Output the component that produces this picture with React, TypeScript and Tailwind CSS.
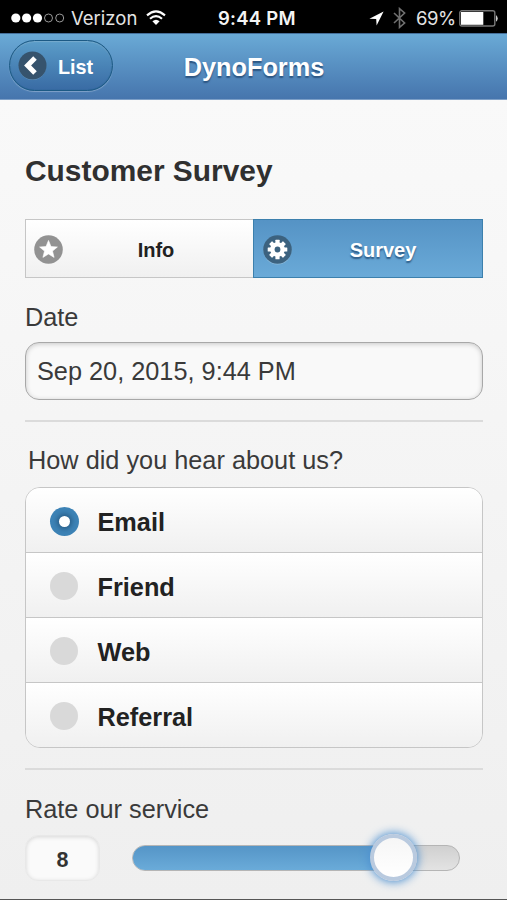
import React, { useState } from 'react';

const SOURCES = ['Email', 'Friend', 'Web', 'Referral'];

const StatusBar: React.FC = () => (
  <div className="h-[33px] bg-black text-white flex items-center pl-[11px] pr-[10px] pt-[3px] font-['Inter','Liberation_Sans',sans-serif] text-[18.5px] leading-[30px]">
    <div className="flex items-center w-[207px]">
      <svg width="54" height="10" viewBox="0 0 54 10">
        <circle cx="4.8" cy="5" r="4.6" fill="#fff" />
        <circle cx="15.6" cy="5" r="4.6" fill="#fff" />
        <circle cx="26.5" cy="5" r="4.6" fill="#fff" />
        <circle cx="37.5" cy="5" r="4" fill="none" stroke="#999" strokeWidth="1" />
        <circle cx="48.7" cy="5" r="4" fill="none" stroke="#999" strokeWidth="1" />
      </svg>
      <span className="ml-[6px] w-[66px] text-[#e4e4e4] whitespace-nowrap">Verizon</span>
      <svg className="ml-[9px]" width="20" height="16" viewBox="0 0 20 16">
        <path d="M1 5.4 Q10 -2.6 19 5.4" fill="none" stroke="#fff" strokeWidth="2.1" />
        <path d="M4 8.7 Q10 3.5 16 8.7" fill="none" stroke="#fff" strokeWidth="2.1" />
        <path d="M6.4 11.2 Q10 8.2 13.6 11.2 L10 15 Z" fill="#fff" />
      </svg>
    </div>
    <span className="font-semibold tracking-[0.25px] text-[#f4f4f4] whitespace-nowrap">9:44 PM</span>
    <div className="flex items-center flex-1 justify-end">
      <svg width="15" height="15" viewBox="0 0 15 15" fill="#fff">
        <path d="M14.6 0.4 L0.4 7.8 L7.2 8 L7.6 14.6 Z" />
      </svg>
      <svg className="ml-[9px]" width="13" height="22" viewBox="0 0 13 22" fill="none" stroke="#707070" strokeWidth="1.6">
        <path d="M1 6 L11.6 16 L6.5 20.4 V1.6 L11.6 6 L1 16" />
      </svg>
      <span className="ml-[10px] w-[39px] text-[#e4e4e4] whitespace-nowrap tracking-[-0.5px]">69%</span>
      <svg className="ml-[4px] -mr-[2px]" width="40" height="17" viewBox="0 0 40 17">
        <rect x="0.8" y="0.8" width="35" height="15.2" rx="2" fill="none" stroke="#777" strokeWidth="1.4" />
        <rect x="2" y="2" width="22.3" height="12.8" fill="#fff" />
        <path d="M37 5 Q40.5 8.4 37 11.8 Z" fill="#ccc" />
      </svg>
    </div>
  </div>
);

const Header: React.FC = () => (
  <header className="h-[67px] border-y border-t-[#456f9a] border-b-[#7d9fc7] bg-linear-to-b from-[#6aaad6] to-[#4675ad] grid grid-cols-[1fr_auto_1fr] items-center px-[9px] text-white font-bold [text-shadow:0_1.5px_1.5px_#2b5480]">
    <button
      type="button"
      className="relative -top-px w-[104px] h-[51px] rounded-full border-[1.6px] border-[#1c5a85] bg-linear-to-b from-[#5b9dc9] to-[#396ba4] shadow-[0_1px_1px_rgba(255,255,255,0.3),inset_0_0_1px_#1c5a85,inset_0_1px_1px_rgba(255,255,255,0.25)] flex items-center pl-[8px] text-[19.8px] leading-[24px]"
    >
      <svg width="29" height="29" viewBox="0 0 29 29" className="shrink-0">
        <circle cx="14.5" cy="15.3" r="13.6" fill="#80b2d6" opacity="0.6" />
        <circle cx="14.5" cy="14.5" r="14" fill="#36536d" />
        <path d="M17 7 L9.6 14.5 L17 22" fill="none" stroke="#fff" strokeWidth="5" />
      </svg>
      <span className="ml-[11px] mt-[3px]">List</span>
    </button>
    <h1 className="text-[25.3px] leading-[30px] pl-px">DynoForms</h1>
  </header>
);

const Divider: React.FC = () => <div className="h-[2px] bg-[#dbdbdb]" />;

const StarIcon: React.FC = () => (
  <svg width="29" height="29" viewBox="0 0 29 29" className="mt-[2px]">
    <circle cx="14.5" cy="14.5" r="14.3" fill="#929292" />
    <path d="M14.5 5.4 L17 11.6 L23.4 12 L18.5 16.1 L20.1 22.4 L14.5 19 L8.9 22.4 L10.5 16.1 L5.6 12 L12 11.6 Z" fill="#fff" stroke="#fff" strokeWidth="0.6" />
  </svg>
);

const GearIcon: React.FC = () => (
  <svg width="29" height="30" viewBox="0 0 29 30" className="mt-[3px]">
    <circle cx="14.5" cy="15.5" r="14" fill="#8dbcdd" />
    <circle cx="14.5" cy="14.5" r="14.3" fill="#3c627f" />
    <g fill="#fff">
      {[0, 45, 90, 135].map((angle) => (
        <rect key={angle} x="12.4" y="4.7" width="4.2" height="19.6" rx="0.5" transform={`rotate(${angle} 14.5 14.5)`} />
      ))}
      <circle cx="14.5" cy="14.5" r="7.3" />
    </g>
    <circle cx="14.5" cy="14.5" r="2.9" fill="#3c627f" />
  </svg>
);

export default function App() {
  const [source, setSource] = useState('Email');
  const rating = 8;

  return (
    <div className="w-[507px] h-[900px] overflow-hidden flex flex-col bg-[#f0f0f0] text-[#3a3a3a] font-['Liberation_Sans',Arial,sans-serif]">
      <StatusBar />
      <Header />
      <main className="flex-1 flex flex-col bg-linear-to-b from-[#f9f9f9] to-[#efefef] border-b border-[#555] pl-[25px] pr-[24px] text-[25.3px]">
        <h2 className="mt-[53px] h-[36px] text-[29.9px] leading-[36px] font-bold text-[#303030]">Customer Survey</h2>

        <div className="mt-[30px] flex h-[59px] text-[20px] font-bold">
          <button type="button" className="w-[228px] flex items-center border-[1.5px] border-r-0 border-[#c6c6c6] bg-linear-to-b from-white to-[#f0f0f0] pl-[8px] text-[#222]">
            <StarIcon />
            <span className="flex-1 pr-[4px] pt-[2px] text-center">Info</span>
          </button>
          <button type="button" className="flex-1 flex items-center border-[1.5px] border-[#3c80ad] bg-linear-to-b from-[#5593c5] to-[#6aaad8] pl-[9px] text-white [text-shadow:0_1.5px_1.5px_#2d5b86]">
            <GearIcon />
            <span className="flex-1 pr-[8px] pt-[2px] text-center">Survey</span>
          </button>
        </div>

        <label className="mt-[24px] h-[30px] leading-[30px]">Date</label>
        <div className="mt-[10px] h-[58px] shrink-0 rounded-[14px] border-[1.6px] border-[#a8a8a8] bg-[#f9f9f9] shadow-[inset_0_1px_5px_rgba(0,0,0,0.2)] flex items-center pl-[11px] pt-[2px]">
          Sep 20, 2015, 9:44 PM
        </div>

        <div className="mt-[20px]">
          <Divider />
        </div>

        <p className="mt-[23px] pl-[3px] h-[30px] leading-[30px]">How did you hear about us?</p>
        <div className="mt-[12px] h-[261px] shrink-0 rounded-[15px] border-[1.6px] border-[#c6c6c6] overflow-hidden grid grid-rows-[65px_65px_65px_64px]">
          {SOURCES.map((item) => (
            <button
              key={item}
              type="button"
              onClick={() => setSource(item)}
              className="flex items-center border-b-[1.6px] last:border-b-0 border-[#c6c6c6] bg-linear-to-b from-white to-[#f0f0f0] pl-[24px] pt-[2px] text-[#222] font-bold"
            >
              <span
                className={`rounded-full flex items-center justify-center ${
                  source === item ? 'w-[29px] h-[29px] bg-[#3d83b6]' : 'w-[28px] h-[28px] mr-px bg-[#d9d9d9]'
                }`}
              >
                {source === item && (
                  <span className="w-[11px] h-[11px] rounded-full bg-white shadow-[0_0_5px_2px_rgba(25,65,100,0.6)]" />
                )}
              </span>
              <span className="ml-[18.5px] pt-px leading-[30px]">{item}</span>
            </button>
          ))}
        </div>

        <div className="mt-[20px]">
          <Divider />
        </div>

        <label className="mt-[24px] h-[30px] leading-[30px]">Rate our service</label>
        <div className="mt-[11px] flex items-start">
          <div className="w-[75px] h-[46px] rounded-[13px] bg-[#fafafa] border border-[#e8e8e8] shadow-[inset_0_1px_4px_rgba(0,0,0,0.15)] flex items-center justify-center pt-[3px] text-[21.5px] leading-[26px] font-bold text-[#333]">
            {rating}
          </div>
          <div className="relative mt-[10px] ml-[32px] w-[328px] h-[26px] rounded-full border-[1.5px] border-[#b5b5b5] bg-linear-to-b from-[#d0d0d0] to-[#e3e3e3]">
            <div
              className="h-full rounded-full bg-linear-to-b from-[#5595c7] to-[#6aabd9]"
              style={{ width: `${rating * 10}%` }}
            />
            <div
              className="absolute top-1/2 -mt-[24px] -ml-[24px] w-[47px] h-[47px] rounded-full border-[4px] border-[#b9cadf] bg-linear-to-b from-[#f6f6f6] to-white shadow-[0_0_10px_1px_#4b8fd0]"
              style={{ left: `${rating * 10}%` }}
            />
          </div>
        </div>
      </main>
    </div>
  );
}
